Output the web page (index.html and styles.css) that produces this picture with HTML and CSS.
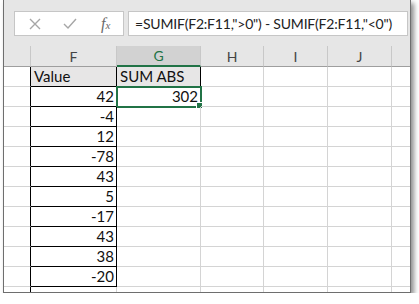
FILE: index.html
```html
<!DOCTYPE html>
<html lang="en">
  <head>
    <meta charset="UTF-8" />
    <title>SUMIF abs</title>
    <link rel="stylesheet" href="styles.css">
  </head>
  <body>
    <div class="window">
      <div class="formula-bar">
        <div class="buttons">
          <svg class="icon" width="12" height="12" viewBox="0 0 12 12">
            <path d="M1 1 L11 11 M11 1 L1 11" stroke="#a6a6a6" stroke-width="1.4" fill="none" />
          </svg>
          <svg class="icon" width="14" height="12" viewBox="0 0 14 12">
            <path d="M1 6 L5 10 L13 1" stroke="#a6a6a6" stroke-width="1.4" fill="none" />
          </svg>
          <span class="fx">f<small>x</small></span>
        </div>
        <div class="formula">=SUMIF(F2:F11,"&gt;0") - SUMIF(F2:F11,"&lt;0")</div>
      </div>

      <table class="sheet">
        <thead>
          <tr>
            <th class="col-e"></th>
            <th class="col-f">F</th>
            <th class="col-g active">G</th>
            <th class="col-h">H</th>
            <th class="col-i">I</th>
            <th class="col-j">J</th>
            <th class="col-k"></th>
          </tr>
        </thead>
        <tbody id="rows"></tbody>
      </table>
    </div>

    <script>
      const values = [42, -4, 12, -78, 43, 5, -17, 43, 38, -20];
      const rows = document.getElementById("rows");

      function addRow(cells) {
        const tr = document.createElement("tr");
        cells.forEach(function (c) {
          const td = document.createElement("td");
          td.className = c.cls || "";
          td.textContent = c.text || "";
          tr.appendChild(td);
        });
        rows.appendChild(tr);
      }

      addRow([
        { cls: "edge" },
        { cls: "tbl label", text: "Value" },
        { cls: "tbl label", text: "SUM ABS" },
        {}, {}, {}, {}
      ]);

      values.forEach(function (v, i) {
        addRow([
          { cls: "edge" },
          { cls: "tbl num", text: v },
          i === 0 ? { cls: "num selected", text: "302" } : {},
          {}, {}, {}, {}
        ]);
      });

      addRow([{ cls: "edge" }, {}, {}, {}, {}, {}, {}]);
    </script>
  </body>
</html>
```

FILE: styles.css
```css
body {
  margin: 0;
  background-color: #fff;
  font-family: "Lato", "Liberation Sans", sans-serif;
}

.window {
  margin-left: 3px;
  width: 406px;
  height: 292px;
  overflow: hidden;
  background-color: #fff;
  border: 1px solid #6e6e6e;
  border-top: none;
  box-shadow: 3px 3px 5px rgba(0, 0, 0, 0.45);
}

.formula-bar {
  display: flex;
  gap: 4px;
  height: 46px;
  padding: 11px 0 0 10px;
  box-sizing: border-box;
  background-color: #e6e6e6;
}

.buttons,
.formula {
  height: 25px;
  box-sizing: border-box;
  background-color: #fff;
  border: 1px solid #c6c6c6;
  display: flex;
  align-items: center;
}

.buttons {
  width: 110px;
  padding-left: 14px;
  gap: 22px;
}

.fx {
  font-family: "Liberation Serif", serif;
  font-style: italic;
  font-size: 16px;
  color: #6a6a6a;
  margin-left: 2px;
}

.fx small {
  font-size: 11px;
}

.formula {
  width: 280px;
  padding-left: 6px;
  font-size: 14px;
  letter-spacing: -0.2px;
  color: #222;
  white-space: nowrap;
}

.sheet {
  border-collapse: separate;
  border-spacing: 0;
  table-layout: fixed;
  width: 430px;
}

.sheet th {
  height: 20px;
  padding: 0;
  background-color: #e6e6e6;
  border-right: 1px solid #c8c8c8;
  border-bottom: 1px solid #9e9e9e;
  font-weight: normal;
  font-size: 14px;
  color: #444;
}

.sheet th.active {
  background-color: #d2d2d2;
  color: #217346;
  border-bottom: 2px solid #217346;
  height: 19px;
}

.col-e { width: 26px; }
.col-f { width: 85px; }
.col-g { width: 83px; }
.col-h { width: 62px; }
.col-i { width: 63px; }
.col-j { width: 63px; }
.col-k { width: 60px; }

.sheet td {
  height: 19px;
  padding: 0 2px;
  border-right: 1px solid #d4d4d4;
  border-bottom: 1px solid #d4d4d4;
  font-size: 15px;
  color: #111;
  line-height: 19px;
  white-space: nowrap;
  position: relative;
}

.sheet td.edge {
  border-right-color: #000;
}

.sheet td.tbl {
  border-right-color: #000;
  border-bottom-color: #000;
}

.sheet td.label {
  background-color: #e7e6e6;
  padding-left: 3px;
}

.num {
  text-align: right;
}

.sheet td.selected {
  outline: 2px solid #217346;
  outline-offset: -1px;
}

.sheet td.selected::after {
  content: "";
  position: absolute;
  right: -3px;
  bottom: -3px;
  width: 5px;
  height: 5px;
  background-color: #217346;
  border: 1px solid #fff;
}
```
